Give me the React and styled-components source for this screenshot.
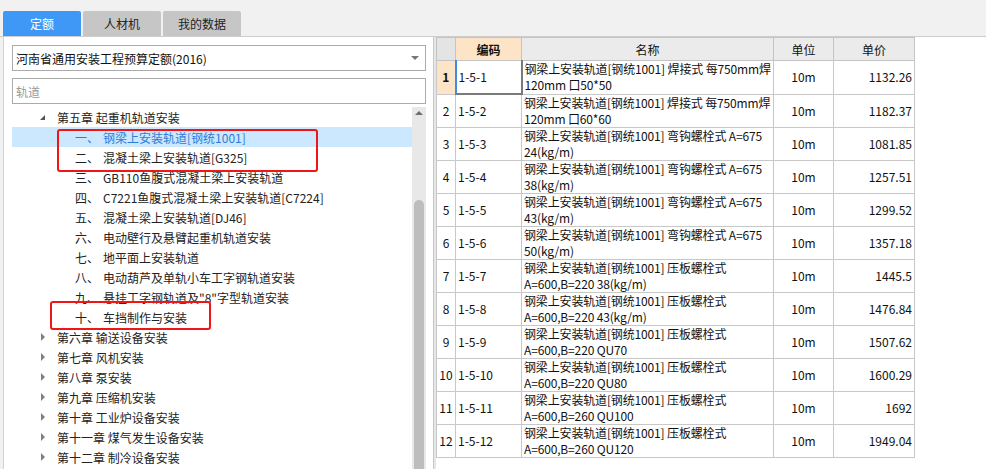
import styled, { createGlobalStyle, css } from "styled-components";

const GlobalStyle = createGlobalStyle`
  html, body { margin: 0; padding: 0; background: #f1f1f1; }
  body { font-family: "Noto Sans CJK SC", "Noto Sans", sans-serif; color: #222; }
`;

const Page = styled.div`
  width: 986px;
  height: 469px;
  display: flex;
  flex-direction: column;
  overflow: hidden;
  background: #f1f1f1;
`;

const TabBar = styled.div`
  height: 25px;
  padding: 11px 0 0 3px;
  display: flex;
  gap: 2px;
`;

const Tab = styled.div`
  width: 78px;
  height: 25px;
  border-radius: 2px 2px 0 0;
  display: flex;
  align-items: center;
  justify-content: center;
  font-size: 12px;
  background: #c6c6c6;
  color: #222;
  ${(p) =>
    p.$active &&
    css`
      background: #3f97f6;
      color: #fff;
    `}
`;

const Body = styled.div`
  flex: 1;
  display: flex;
  min-height: 0;
  border-top: 1px solid #cdcdcd;
  padding-left: 3px;
`;

const LeftPanel = styled.div`
  width: 414px;
  flex: none;
  background: #fff;
  border-left: 1px solid #d2d2d2;
  padding: 8px 7px 0 8px;
  display: flex;
  flex-direction: column;
  min-height: 0;
`;

const Select = styled.div`
  height: 24px;
  border: 1px solid #ababab;
  display: flex;
  align-items: center;
  justify-content: space-between;
  padding: 0 6px 0 3px;
  font-size: 12px;
  color: #111;
`;

const SelectArrow = styled.span`
  width: 0;
  height: 0;
  border-left: 4px solid transparent;
  border-right: 4px solid transparent;
  border-top: 4px solid #777;
`;

const Search = styled.div`
  height: 24px;
  margin-top: 7px;
  border: 1px solid #ababab;
  display: flex;
  align-items: center;
  padding-left: 3px;
  font-size: 12px;
  color: #999;
`;

const TreeArea = styled.div`
  margin-top: 3px;
  flex: 1;
  display: flex;
  min-height: 0;
  position: relative;
`;

const TreeList = styled.div`
  flex: 1;
  overflow: hidden;
`;

const TreeRow = styled.div`
  height: 20px;
  display: flex;
  align-items: center;
  font-size: 12px;
  color: #222;
  white-space: nowrap;
  padding-left: ${(p) => (p.$child ? 63 : 27)}px;
  ${(p) =>
    p.$selected &&
    css`
      background: #cce8ff;
      color: #2f7bd8;
    `}
`;

const Caret = styled.span`
  width: 0;
  height: 0;
  margin-right: 12px;
  ${(p) =>
    p.$open
      ? css`
          border-left: 5px solid transparent;
          border-bottom: 5px solid #555;
          margin-left: 1px;
        `
      : css`
          border-top: 4px solid transparent;
          border-bottom: 4px solid transparent;
          border-left: 4px solid #808080;
          margin-left: 2px;
          margin-right: 12px;
        `}
`;

const Num = styled.span`
  width: 28px;
`;

const Mark = styled.div`
  position: absolute;
  border: 2px solid #f01616;
  border-radius: 3px;
  pointer-events: none;
`;

const ScrollTrack = styled.div`
  width: 14px;
  background: #e8e8e8;
  display: flex;
  flex-direction: column;
  align-items: center;
`;

const ScrollUp = styled.span`
  margin-top: 4px;
  width: 0;
  height: 0;
  border-left: 4px solid transparent;
  border-right: 4px solid transparent;
  border-bottom: 4px solid #6e6e6e;
`;

const ScrollThumb = styled.div`
  margin-top: 85px;
  width: 10px;
  flex: 1;
  background: #bdbdbd;
  border-radius: 5px 5px 0 0;
`;

const Splitter = styled.div`
  width: 2px;
  flex: none;
  background: #e6e6e6;
  border-left: 1px solid #c8c8c8;
`;

const RightPanel = styled.div`
  flex: 1;
  background: #fff;
`;

const Grid = styled.table`
  border-collapse: collapse;
  table-layout: fixed;
  width: 479px;
  font-size: 12px;
  color: #111;
  border-left: 1px solid #b9b9b9;
`;

const Head = styled.th`
  height: 22px;
  padding: 0;
  font-weight: ${(p) => (p.$hot ? 700 : 400)};
  background: ${(p) => (p.$hot ? "#fde4c6" : p.$corner ? "#e4e4e4" : "#ebebeb")};
  border: 1px solid #c4c4c4;
  font-size: 12px;
  color: #111;
`;

const Cell = styled.td`
  height: 32px;
  padding: 0 2px;
  border: 1px solid #c8c8c8;
  vertical-align: middle;
  white-space: nowrap;
  overflow: hidden;
  line-height: 16px;
  text-align: ${(p) => p.$align || "left"};
  ${(p) =>
    p.$hot &&
    css`
      background: #fde4c6;
      font-weight: 700;
    `}
  ${(p) =>
    p.$focus &&
    css`
      border-left: 2px solid #3c8de6;
      border-right: 2px solid #7a7a7a;
      border-bottom: 2px solid #7a7a7a;
    `}
`;

const NameCell = styled(Cell)`
  vertical-align: top;
  padding: 0 1px 0 2px;
  letter-spacing: -0.15px;
`;

const Line = styled.div`
  height: 16px;
  overflow: hidden;
`;

const chapters = [
  "第六章 输送设备安装",
  "第七章 风机安装",
  "第八章 泵安装",
  "第九章 压缩机安装",
  "第十章 工业炉设备安装",
  "第十一章 煤气发生设备安装",
  "第十二章 制冷设备安装",
];

const sections = [
  ["一、", "钢梁上安装轨道[钢统1001]"],
  ["二、", "混凝土梁上安装轨道[G325]"],
  ["三、", "GB110鱼腹式混凝土梁上安装轨道"],
  ["四、", "C7221鱼腹式混凝土梁上安装轨道[C7224]"],
  ["五、", "混凝土梁上安装轨道[DJ46]"],
  ["六、", "电动壁行及悬臂起重机轨道安装"],
  ["七、", "地平面上安装轨道"],
  ["八、", "电动葫芦及单轨小车工字钢轨道安装"],
  ["九、", "悬挂工字钢轨道及\"8\"字型轨道安装"],
  ["十、", "车挡制作与安装"],
];

const rowsData = [
  ["1-5-1", "钢梁上安装轨道[钢统1001] 焊接式 每750mm焊", "120mm 口50*50", "1132.26"],
  ["1-5-2", "钢梁上安装轨道[钢统1001] 焊接式 每750mm焊", "120mm 口60*60", "1182.37"],
  ["1-5-3", "钢梁上安装轨道[钢统1001] 弯钩螺栓式 A=675", "24(kg/m)", "1081.85"],
  ["1-5-4", "钢梁上安装轨道[钢统1001] 弯钩螺栓式 A=675", "38(kg/m)", "1257.51"],
  ["1-5-5", "钢梁上安装轨道[钢统1001] 弯钩螺栓式 A=675", "43(kg/m)", "1299.52"],
  ["1-5-6", "钢梁上安装轨道[钢统1001] 弯钩螺栓式 A=675", "50(kg/m)", "1357.18"],
  ["1-5-7", "钢梁上安装轨道[钢统1001] 压板螺栓式", "A=600,B=220 38(kg/m)", "1445.5"],
  ["1-5-8", "钢梁上安装轨道[钢统1001] 压板螺栓式", "A=600,B=220 43(kg/m)", "1476.84"],
  ["1-5-9", "钢梁上安装轨道[钢统1001] 压板螺栓式", "A=600,B=220 QU70", "1507.62"],
  ["1-5-10", "钢梁上安装轨道[钢统1001] 压板螺栓式", "A=600,B=220 QU80", "1600.29"],
  ["1-5-11", "钢梁上安装轨道[钢统1001] 压板螺栓式", "A=600,B=260 QU100", "1692"],
  ["1-5-12", "钢梁上安装轨道[钢统1001] 压板螺栓式", "A=600,B=260 QU120", "1949.04"],
];

const App = () => {
  return (
    <Page>
      <GlobalStyle />
      <TabBar>
        <Tab $active>定额</Tab>
        <Tab>人材机</Tab>
        <Tab>我的数据</Tab>
      </TabBar>
      <Body>
        <LeftPanel>
          <Select>
            <span>河南省通用安装工程预算定额(2016)</span>
            <SelectArrow />
          </Select>
          <Search>轨道</Search>
          <TreeArea>
            <TreeList>
              <TreeRow>
                <Caret $open />
                第五章 起重机轨道安装
              </TreeRow>
              {sections.map(([n, t], i) => (
                <TreeRow key={n} $child $selected={i === 0}>
                  <Num>{n}</Num>
                  {t}
                </TreeRow>
              ))}
              {chapters.map((c) => (
                <TreeRow key={c}>
                  <Caret />
                  {c}
                </TreeRow>
              ))}
            </TreeList>
            <ScrollTrack>
              <ScrollUp />
              <ScrollThumb />
            </ScrollTrack>
            <Mark style={{ left: 45, top: 22, width: 257, height: 39 }} />
            <Mark style={{ left: 38, top: 194, width: 157, height: 25 }} />
          </TreeArea>
        </LeftPanel>
        <Splitter />
        <RightPanel>
          <Grid>
            <colgroup>
              <col style={{ width: 19 }} />
              <col style={{ width: 66 }} />
              <col style={{ width: 252 }} />
              <col style={{ width: 60 }} />
              <col style={{ width: 81 }} />
            </colgroup>
            <thead>
              <tr>
                <Head $corner />
                <Head $hot>编码</Head>
                <Head>名称</Head>
                <Head>单位</Head>
                <Head>单价</Head>
              </tr>
            </thead>
            <tbody>
              {rowsData.map(([code, l1, l2, price], i) => (
                <tr key={code}>
                  <Cell $align="center" $hot={i === 0}>
                    {i + 1}
                  </Cell>
                  <Cell $focus={i === 0}>{code}</Cell>
                  <NameCell>
                    <Line>{l1}</Line>
                    <Line>{l2}</Line>
                  </NameCell>
                  <Cell $align="center">10m</Cell>
                  <Cell $align="right">{price}</Cell>
                </tr>
              ))}
            </tbody>
          </Grid>
        </RightPanel>
      </Body>
    </Page>
  );
};

export default App;
